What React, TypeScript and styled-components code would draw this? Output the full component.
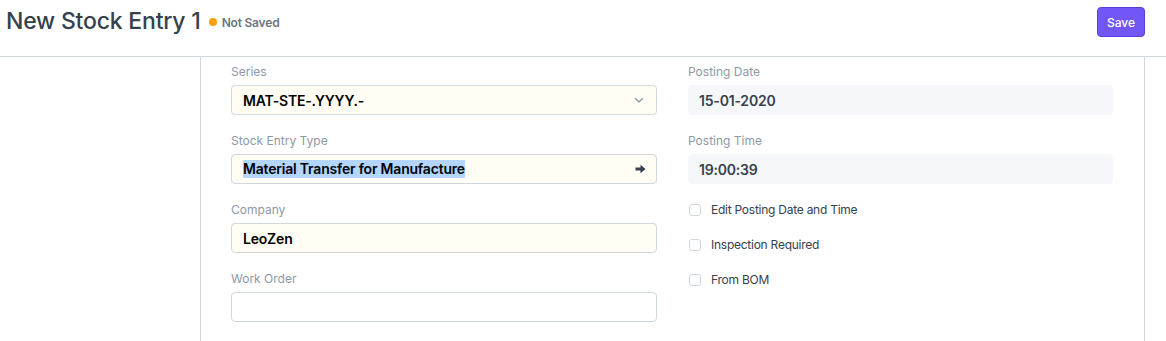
import { FC } from 'react'
import styled, { createGlobalStyle } from 'styled-components'

const GlobalStyle = createGlobalStyle`
  * { box-sizing: border-box; }
  body {
    margin: 0;
    background: #fff;
    font-family: Inter, "Noto Sans", "Liberation Sans", sans-serif;
    color: #36414c;
  }
`

const Header = styled.header`
  height: 57px;
  display: flex;
  align-items: flex-start;
  justify-content: space-between;
  padding: 6px 21px 0 6px;
  border-bottom: 1px solid #d1d8dd;
`
const TitleWrap = styled.div`
  display: flex;
  align-items: center;
  gap: 5px;
  height: 30px;
`
const Title = styled.h1`
  margin: 0;
  font-size: 23px;
  font-weight: 500;
  color: #36414c;
  letter-spacing: -0.2px;
`
const Indicator = styled.span`
  display: flex;
  align-items: center;
  gap: 5px;
  font-size: 12px;
  font-weight: 600;
  color: #6c7680;
  margin-left: 3px;
  margin-top: 2px;
  letter-spacing: -0.2px;
  &::before {
    content: '';
    width: 8px;
    height: 8px;
    border-radius: 50%;
    background: #ff9e0d;
  }
`
const SaveButton = styled.button`
  margin-top: 1px;
  width: 48px;
  height: 30px;
  background: #7257f6;
  border: 1px solid #5a3ce0;
  border-radius: 4px;
  color: #fff;
  font-family: inherit;
  font-size: 12px;
  font-weight: 500;
`

const Body = styled.div`
  display: flex;
`
const Spacer = styled.div`
  width: 200px;
  flex: none;
`
const Card = styled.main`
  width: 945px;
  height: 285px;
  border-left: 1px solid #d1d8dd;
  border-right: 1px solid #d1d8dd;
  padding: 6px 30px 0 30px;
  display: grid;
  grid-template-columns: 426px 425px;
  column-gap: 31px;
`
const Column = styled.div`
  display: flex;
  flex-direction: column;
`
const Field = styled.div`
  display: flex;
  flex-direction: column;
  margin-bottom: 17px;
`
const Label = styled.label`
  font-size: 12px;
  line-height: 18px;
  color: #8d99a6;
  margin-bottom: 4px;
`
const Input = styled.div<{ $readonly?: boolean }>`
  height: 30px;
  display: flex;
  align-items: center;
  justify-content: space-between;
  padding: 0 11px 0 ${p => (p.$readonly ? '10px' : '11px')};
  border-radius: 4px;
  font-size: 14px;
  font-weight: 600;
  letter-spacing: -0.2px;
  color: ${p => (p.$readonly ? '#36414c' : '#000')};
  background: ${p => (p.$readonly ? '#f5f7fa' : '#fffdf4')};
  border: 1px solid ${p => (p.$readonly ? '#f5f7fa' : '#d1d8dd')};
`
const EmptyInput = styled(Input)`
  background: #fff;
`
const Selected = styled.span`
  background: #b4d5fe;
  line-height: 18px;
`
const CheckList = styled.div`
  display: flex;
  flex-direction: column;
  margin-top: -9px;
`
const CheckRow = styled.div`
  display: flex;
  align-items: center;
  height: 35px;
  gap: 10px;
  padding-left: 1px;
  font-size: 12px;
  letter-spacing: -0.25px;
  color: #36414c;
`
const Box = styled.span`
  width: 12px;
  height: 12px;
  border: 1px solid #d1d8dd;
  border-radius: 3px;
  background: #fff;
`

const Chevron: FC = () => (
  <svg width="12" height="12" viewBox="0 0 12 12" fill="none">
    <path d="M2.5 4.5 6 8l3.5-3.5" stroke="#8d99a6" strokeWidth="1.4" strokeLinecap="round" strokeLinejoin="round" />
  </svg>
)

const Arrow: FC = () => (
  <svg width="11" height="10" viewBox="0 0 11 10" style={{ marginRight: -1 }}>
    <path d="M0.5 3.5h5V0.8L10.5 5l-5 4.2V6.5h-5z" fill="#36414c" />
  </svg>
)

const checks = ['Edit Posting Date and Time', 'Inspection Required', 'From BOM']

const App: FC = () => {
  return (
    <>
      <GlobalStyle />
      <Header>
        <TitleWrap>
          <Title>New Stock Entry 1</Title>
          <Indicator>Not Saved</Indicator>
        </TitleWrap>
        <SaveButton>Save</SaveButton>
      </Header>
      <Body>
        <Spacer />
        <Card>
          <Column>
            <Field>
              <Label>Series</Label>
              <Input>
                MAT-STE-.YYYY.-
                <Chevron />
              </Input>
            </Field>
            <Field>
              <Label>Stock Entry Type</Label>
              <Input>
                <Selected>Material Transfer for Manufacture</Selected>
                <Arrow />
              </Input>
            </Field>
            <Field>
              <Label>Company</Label>
              <Input>LeoZen</Input>
            </Field>
            <Field>
              <Label>Work Order</Label>
              <EmptyInput />
            </Field>
          </Column>
          <Column>
            <Field>
              <Label>Posting Date</Label>
              <Input $readonly>15-01-2020</Input>
            </Field>
            <Field>
              <Label>Posting Time</Label>
              <Input $readonly>19:00:39</Input>
            </Field>
            <CheckList>
              {checks.map(c => (
                <CheckRow key={c}>
                  <Box />
                  {c}
                </CheckRow>
              ))}
            </CheckList>
          </Column>
        </Card>
      </Body>
    </>
  )
}

export default App
